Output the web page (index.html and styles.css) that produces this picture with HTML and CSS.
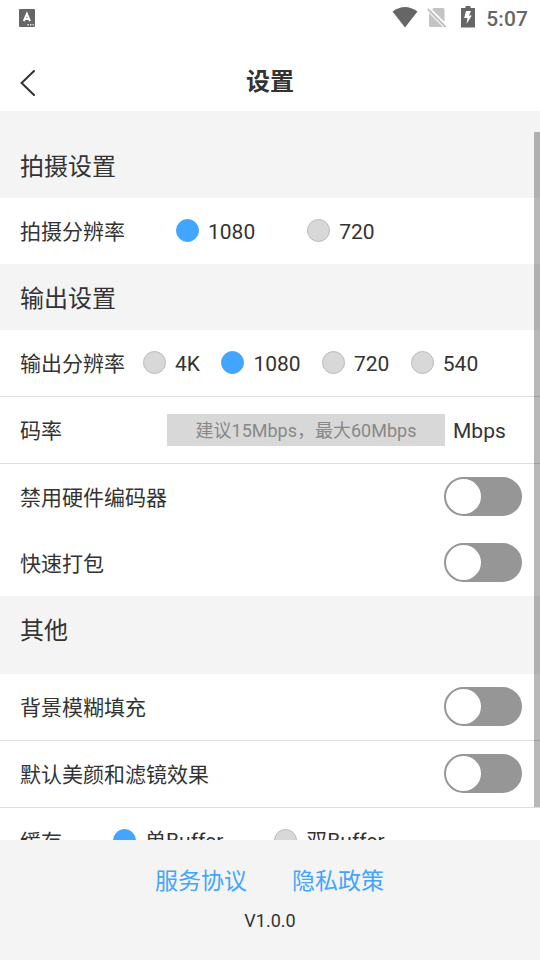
FILE: index.html
```
<!DOCTYPE html>
<html lang="zh-CN">
<head>
<meta charset="utf-8">
<title>设置</title>
<link rel="stylesheet" href="styles.css">
</head>
<body>
<div class="screen">
  <header class="status">
    <svg class="app-icon" width="16" height="18" viewBox="0 0 16 18"><rect width="16" height="18" rx="1" fill="#666"/><path d="M4.8 12.2 7.9 4.8 11 12.2M5.8 10h4.2" fill="none" stroke="#fff" stroke-width="2"/><path d="M8.3 15.8h6.5" stroke="#ddd" stroke-width="1.4" stroke-dasharray="1.6 1"/></svg>
    <div class="status-right">
      <svg width="26" height="21" viewBox="0 0 26 21"><path d="M.5 4.5Q13-4.5 25.5 4.5L13 20.5Z" fill="#666"/></svg>
      <svg class="sim" width="20" height="21" viewBox="0 0 20 21"><path d="M6.5 1H16q1.5 0 1.5 1.5v15L4 4ZM2 6l14 14H3.5Q2 20 2 18.5Z" fill="#c4c4c4"/><path d="M2 .7l18 18" stroke="#fff" stroke-width="1.7"/><path d="M.7 2l18 18" stroke="#c4c4c4" stroke-width="1.9"/></svg>
      <svg class="battery" width="14" height="22" viewBox="0 0 14 22"><path d="M4.5 0h5v2H14v19.5H0V2h4.5Z" fill="#666"/><path d="M5 5h5L8 9.5h2.8L5.5 18l1-6H3.2Z" fill="#fff"/></svg>
      <span class="clock">5:07</span>
    </div>
  </header>
  <nav class="titlebar">
    <svg class="back" width="16" height="26" viewBox="0 0 16 26"><path d="M14 1 1.6 13 14 25" fill="none" stroke="#333" stroke-width="2" stroke-linecap="round"/></svg>
    <h1>设置</h1>
  </nav>
  <main class="content">
    <h2 class="section first">拍摄设置</h2>
    <div class="row"><span class="label">拍摄分辨率</span>
      <div class="radios shoot"><span class="radio on"><span class="value">1080</span></span><span class="radio"><span class="value">720</span></span></div></div>
    <h2 class="section">输出设置</h2>
    <div class="row line"><span class="label">输出分辨率</span>
      <div class="radios output"><span class="radio"><span class="value">4K</span></span><span class="radio on"><span class="value">1080</span></span><span class="radio"><span class="value">720</span></span><span class="radio"><span class="value">540</span></span></div></div>
    <div class="row line"><span class="label">码率</span><div class="rate"><span class="field">建议15Mbps，最大60Mbps</span><span class="unit">Mbps</span></div></div>
    <div class="row"><span class="label">禁用硬件编码器</span><i class="switch"></i></div>
    <div class="row"><span class="label">快速打包</span><i class="switch"></i></div>
    <h2 class="section other">其他</h2>
    <div class="row line"><span class="label">背景模糊填充</span><i class="switch"></i></div>
    <div class="row line"><span class="label">默认美颜和滤镜效果</span><i class="switch"></i></div>
    <div class="row"><span class="label">缓存</span><div class="radios buffer"><span class="radio on"><span class="mode">单Buffer</span></span><span class="radio"><span class="mode">双Buffer</span></span></div></div>
    <i class="scrollbar"></i>
  </main>
  <footer><div class="links"><a>服务协议</a><a>隐私政策</a></div><div class="version">V1.0.0</div></footer>
</div>
</body>
</html>
```
FILE: styles.css
```
*, *::before { box-sizing: border-box; }
body { margin: 0; font-family: Roboto, "Noto Sans CJK SC", sans-serif; font-size: 21px; color: #333; }
.screen { width: 540px; height: 960px; display: flex; flex-direction: column; background: #fff; overflow: hidden; }
.status { height: 36px; display: flex; flex: none; justify-content: space-between; padding: 0 12px 0 19px; color: #666; }
.app-icon { margin-top: 9px; }
.status-right { display: flex; padding-top: 7px; }
.sim { margin-left: 9px; }
.battery { margin: -1px 0 0 14px; }
.clock { margin-left: 11px; line-height: 24px; font-weight: 500; letter-spacing: .1px; }
.titlebar { height: 75px; flex: none; display: grid; grid-template-columns: 60px 1fr 60px; }
.back { margin: 34px 0 0 20px; }
h1 { margin: 0; text-align: center; font-size: 24px; line-height: 92px; font-weight: 700; }
.content { position: relative; height: 729px; flex: none; overflow: hidden; }
.section { margin: 0; height: 66px; line-height: 70px; padding-left: 20px; background: #f4f4f4; font-size: 24px; font-weight: 400; }
.first { height: 87px; padding-top: 21px; }
.other { height: 78px; }
.row { height: 66px; display: flex; align-items: center; padding: 0 18px 1px 20px; }
.line { height: 67px; border-bottom: 1px solid #ddd; }
.label { flex: none; padding-bottom: 2px; }
.radios { display: flex; }
.radio { display: flex; align-items: center; white-space: nowrap; }
.radio::before { content: ""; width: 23px; height: 23px; margin-right: 9px; border: 1px solid #bbb; border-radius: 50%; background: #d8d8d8; }
.on::before { background: #42a5ff; border-color: #42a5ff; }
.value, .unit { padding-top: 2px; }
.shoot { margin-left: 51px; gap: 52px; }
.output { margin-left: 18px; gap: 21.4px; }
.buffer { margin-left: 51px; gap: 51px; }
.mode { padding-bottom: 3px; }
.rate { display: flex; align-items: center; margin-left: 105px; padding-top: 1px; gap: 8px; }
.field { width: 278px; height: 32px; line-height: 34px; background: #d8d8d8; color: #888; font-size: 18px; text-align: center; }
.switch { width: 78px; height: 39px; margin-left: auto; border: 2px solid #969696; border-radius: 20px; background: #969696; }
.switch::before { content: ""; display: block; width: 35px; height: 35px; border-radius: 50%; background: #fff; }
.scrollbar { position: absolute; top: 21px; right: 0; width: 6px; height: 675px; background: rgba(0, 0, 0, .28); }
footer { height: 120px; background: #f4f4f4; text-align: center; }
.links { display: flex; justify-content: center; gap: 45px; padding: 22px 1px 0 0; color: #42a5ff; font-size: 23px; line-height: 40px; }
.version { font-size: 18px; line-height: 38px; }
```
